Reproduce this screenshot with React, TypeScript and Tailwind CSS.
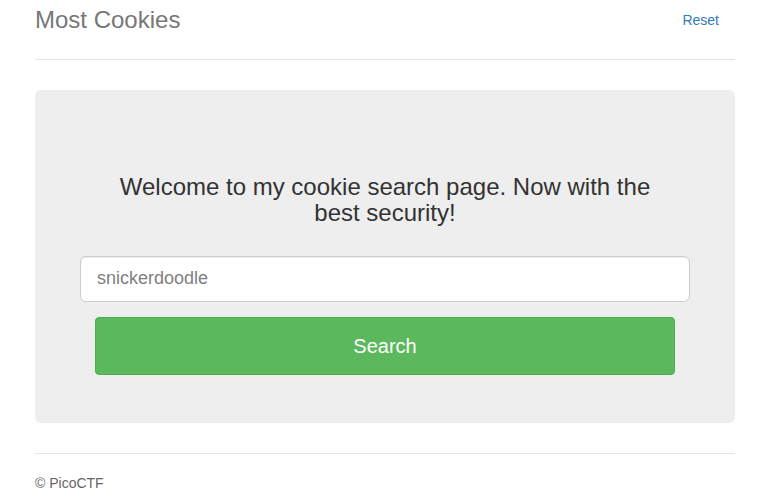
import React from "react";

export default function App() {
  return (
    <div
      className="w-full min-h-[496px] bg-white pl-[35px] pr-[33px] text-[14px] leading-[20px] text-[#333]"
      style={{ fontFamily: '"Liberation Sans", Arial, sans-serif' }}
    >
      <div className="flex items-start justify-between h-[60px] border-b border-[#e5e5e5]">
        <h3 className="text-[24px] leading-[40px] text-[#777] font-normal m-0">Most Cookies</h3>
        <a href="#" className="block pl-[15px] pr-[16px] py-[10px] text-[14px] leading-[20px] text-[#337ab7]">
          Reset
        </a>
      </div>

      <div className="mt-[30px] bg-[#eeeeee] rounded-[6px] px-[60px] pt-[84px] pb-[48px] text-center">
        <h3 className="text-[24px] leading-[26.4px] font-normal text-[#333] mb-[29px]">
          Welcome to my cookie search page. Now with the best security!
        </h3>
        <form onSubmit={(e) => e.preventDefault()} className="flex flex-col">
          <input
            type="text"
            placeholder="snickerdoodle"
            className="mx-[-15px] h-[46px] px-[16px] text-[18px] bg-white border border-[#ccc] rounded-[6px] shadow-[inset_0_1px_1px_rgba(0,0,0,0.075)] placeholder:text-[#808080] text-[#555] outline-none"
          />
          <button
            type="submit"
            className="mt-[15px] h-[58px] w-full bg-[#5cb85c] border border-[#4cae4c] rounded-[4px] text-white text-[20px]"
          >
            Search
          </button>
        </form>
      </div>

      <div className="mt-[30px] border-t border-[#e5e5e5] pt-[19px]">
        <p className="text-[14px] leading-[20px] text-[#666]">© PicoCTF</p>
      </div>
    </div>
  );
}
